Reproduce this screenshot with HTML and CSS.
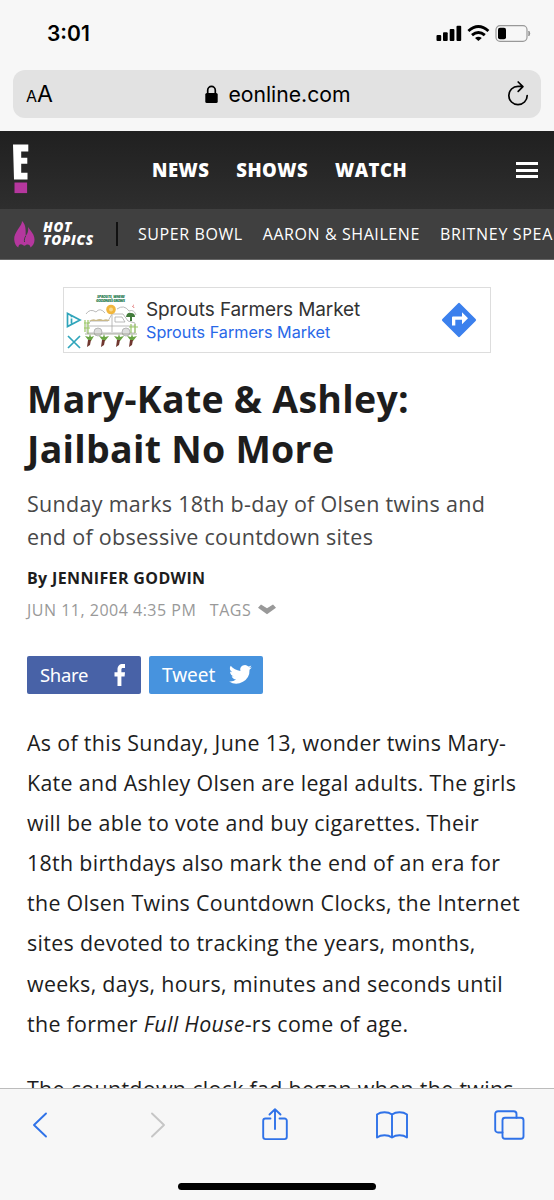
FILE: index.html
```html
<!DOCTYPE html>
<html lang="en">
<head>
<meta charset="utf-8">
<title>E! Online</title>
<link rel="stylesheet" href="styles.css">
</head>
<body>
<div class="phone">
  <header class="browser">
    <div class="status">
      <span class="clock">3:01</span>
      <svg class="indicators" width="96" height="20" viewBox="0 0 96 20">
        <g fill="#000"><rect x="0.500" y="10" width="4.700" height="6" rx="1"/><rect x="7" y="7.300" width="4.700" height="8.700" rx="1"/><rect x="13.700" y="4" width="4.700" height="12" rx="1"/><rect x="20.500" y="0.700" width="4.700" height="15.300" rx="1"/></g>
        <g fill="none" stroke="#000" stroke-width="2.900"><path d="M32.400 6Q42.400 -2.800 52.400 6"/><path d="M36 10.200Q42.400 4.600 48.800 10.200"/></g>
        <path d="M39 13Q42.400 10.400 45.800 13L42.400 16Z"/>
        <rect x="60" y="0.700" width="31" height="15.600" rx="4" fill="none" stroke="#999" stroke-width="1.200"/>
        <rect x="62" y="2.700" width="8" height="11.600" rx="2"/>
        <path d="M92.800 6q2 2.300 0 5z" fill="#888" stroke="#888" stroke-width=".7"/>
      </svg>
    </div>
    <div class="address">
      <span class="reader"><small>A</small>A</span>
      <span class="site"><svg width="13" height="19" viewBox="0 0 13 19"><rect x="0.300" y="8" width="12.400" height="10" rx="1.600"/><path d="M2.700 9V5.200a3.800 3.800 0 0 1 7.600 0V9" fill="none" stroke="#000" stroke-width="1.700"/></svg>eonline.com</span>
      <svg class="reload" width="22" height="26" viewBox="0 0 22 26" fill="none" stroke="#000" stroke-width="1.700" stroke-linecap="round" stroke-linejoin="round"><path d="M20.200 14.500A9.200 9.200 0 1 1 11 5.300h4.500M11.200 1l4.700 4.600-4.700 4.700"/></svg>
    </div>
  </header>

  <nav class="masthead">
    <svg class="brand" width="16" height="50" viewBox="0 0 16 50"><path fill="#fff" d="M0 .4h15.300v7H8.200v6.300h6.100v6H8.200v9h6.300v6.700H1z"/><path fill="#b5379e" d="M1.500 38.500h12.600v10.600H1.500z"/></svg>
    <ul class="sections"><li>NEWS</li><li>SHOWS</li><li>WATCH</li></ul>
    <div class="burger"><i></i><i></i><i></i></div>
  </nav>
  <nav class="topics">
    <svg class="flame" width="21" height="27" viewBox="0 0 21 27"><path fill="#b5379e" d="M8 0C8.300 5-.3 11 .2 18.500.5 22.500 2 25.200 4.300 26.400 4.500 24 6 23 7.700 23.500c1.400.4 1.800 1.200 2.800 1.200s1.200-1 2.500-1.200c2-.4 3.200 1 3.500 2.900 2.500-1.500 4-4.100 4-7.600 0-5.500-3.200-8-6.500-12.800.8 5.200-1 7-2.300 9.200C11.600 9.700 12.300 4 8 0z"/><path d="M11.700 15c-1.200 2-1.500 3.700-1.200 6" stroke="#404040" fill="none"/></svg>
    <div class="hot"><span>HOT</span><span>TOPICS</span></div>
    <span class="divider"></span>
    <span class="topic">SUPER BOWL</span><span class="topic">AARON &amp; SHAILENE</span><span class="topic last">BRITNEY SPEARS</span>
  </nav>

  <main>
    <aside class="ad">
      <svg class="choices" width="16" height="38" viewBox="0 0 16 38" fill="none" stroke="#30a5bb" stroke-width="1.700"><path d="M1.500 1.500v13L14 8zM5.500 6.500v5"/><path d="M5.500 3.800v1.500M2 24l12 12M14 24L2 36"/></svg>
      <svg class="art" width="54" height="54" viewBox="0 0 54 54">
        <g fill="none" stroke="#aaa" stroke-width=".8"><path d="M2 20q4-6 10-2 4-5 9 1M33 15q7-5 12 2 5-2 7 4"/><path d="M3 30l4-3h17l4-7h11l5 7 7 2v10H3zM28 21v17M31 23h7l3 5H31zM4 32h47"/><circle cx="14" cy="38" r="4" fill="#ddd"/><circle cx="42" cy="38" r="4" fill="#ddd"/></g>
        <path d="M5 27q4-3 7-1 4-2 7 0 4-2 7 1z" fill="#c9b98a"/>
        <circle cx="27" cy="15.500" r="4.800" fill="#f1b63c"/><circle cx="27" cy="15.500" r="2" fill="#f8d98e"/>
        <path d="M46 27v-4h-4q1-5 5-4 4 0 4 4h-3v4z" fill="#427b3b"/><path d="M48 13l2-3-1 4 2-1z" fill="#d66"/>
        <path d="M1 26v12M4 26v14M0 29h6M0 34h6M47 30v9M51 30v9M45 33h9" stroke="#9bc768" stroke-width="1.200"/>
        <path d="M1 40h52" stroke="#8a917b" stroke-width=".7"/>
        <g fill="#69a443"><path d="M5 47l-4-5 4 1 1-3 1 3 3-1-3 5zM19 47l-4-5 4 1 1-3 1 3 4-1-4 5zM34 47l-4-5 4 1 1-3 1 3 4-1-4 5zM47 47l-4-5 4 1 1-3 1 3 4-1-4 5z"/></g>
        <path d="M4 46h3l-1 5-3 2zM18 46h3l-1 5-3 2zM33 46h3l-1 5-3 2zM46 46h3l-1 5-3 2z" fill="#70372f"/>
        <g fill="#237a4d" font-family="Open Sans, sans-serif" font-size="3.800" font-weight="800" font-style="italic"><text x="13" y="3.500" textLength="28">SPROUTS, WHERE</text><text x="12" y="7.700" textLength="29">GOODNESS GROWS</text></g>
      </svg>
      <div class="adcopy"><span class="adname">Sprouts Farmers Market</span><span class="adlink">Sprouts Farmers Market</span></div>
      <svg class="directions" width="36" height="36" viewBox="0 0 36 36"><rect x="5.500" y="5.500" width="25" height="25" rx="1.500" transform="rotate(45 18 18)" fill="#3b80ed"/><path d="M11 23.500V15.500q0-1 1-1h9v-4.200l6 6-6 6v-4.500H14.300v5.700z" fill="#fff"/></svg>
    </aside>

    <article>
      <h1>Mary-Kate &amp; Ashley:<br>Jailbait No More</h1>
      <p class="deck">Sunday marks 18th b-day of Olsen twins and<br>end of obsessive countdown sites</p>
      <p class="byline">By JENNIFER GODWIN</p>
      <p class="meta"><span>JUN 11, 2004 4:35 PM</span><span>TAGS</span><svg width="18" height="11" viewBox="0 0 18 11"><path d="M3 .5L9 4.200 15 .5l3 3.200L9 10.300 0 3.700z" fill="#999"/></svg></p>
      <div class="share">
        <span class="button facebook">Share<svg width="12" height="22" viewBox="0 0 12 22"><path fill="#fff" d="M3.500 22V12.400H.5V8.300h3V5.500C3.500 2 5.500 0 8.700 0H11v4H9C7.800 4 7.400 4.600 7.400 5.700v2.600H11l-.4 4.100H7.400V22z"/></svg></span>
        <span class="button twitter">Tweet<svg width="23" height="19" viewBox="0 0 24 20"><path fill="#fff" d="M24 2.400c-.9.400-1.800.7-2.800.8 1-.6 1.800-1.600 2.200-2.700-1 .6-2 1-3.100 1.200A4.900 4.900 0 0 0 11.900 6.200C7.800 6 4.200 4 1.700.9a4.900 4.900 0 0 0 1.500 6.600c-.8 0-1.600-.2-2.200-.6v.1c0 2.400 1.700 4.400 3.900 4.800-.7.200-1.500.2-2.200.1.600 2 2.400 3.400 4.600 3.400A9.900 9.900 0 0 1 0 17.300 14 14 0 0 0 21.500 4.900c1-.7 1.800-1.600 2.500-2.500z"/></svg></span>
      </div>
      <p class="story">As of this Sunday, June 13, wonder twins Mary-<br>Kate and Ashley Olsen are legal adults. The girls<br>will be able to vote and buy cigarettes. Their<br>18th birthdays also mark the end of an era for<br>the Olsen Twins Countdown Clocks, the Internet<br>sites devoted to tracking the years, months,<br>weeks, days, hours, minutes and seconds until<br>the former <em>Full House</em>-rs come of age.</p>
      <p class="story">The countdown clock fad began when the twins</p>
    </article>
  </main>

  <footer class="toolbar">
    <div class="tools">
      <svg width="16" height="28" viewBox="0 0 16 28"><path d="M14 2.500L2 14l12 11.500"/></svg>
      <svg class="off" width="16" height="28" viewBox="0 0 16 28"><path d="M3 2.500L15 14 3 25.500"/></svg>
      <svg width="26" height="34" viewBox="0 0 26 34"><path d="M8.500 10.500H3.500a2.300 2.300 0 0 0-2.300 2.300v16a2.300 2.300 0 0 0 2.300 2.300h19a2.300 2.300 0 0 0 2.300-2.300v-16a2.300 2.300 0 0 0-2.300-2.300h-5M13 21V1.300M7.500 6.500L13 1.200 18.500 6.500"/></svg>
      <svg width="32" height="28" viewBox="0 0 32 28"><path d="M16 3.500C12 .5 5 .5 1 3.500v23c4-3 11-3 15 0 4-3 11-3 15 0v-23c-4-3-11-3-15 0v23"/></svg>
      <svg width="31" height="30" viewBox="0 0 31 30"><rect x="8.500" y="7.700" width="21" height="21" rx="2.500"/><path d="M8.500 22.500H4A2.800 2.800 0 0 1 1.200 19.700V4A2.800 2.800 0 0 1 4 1.200h15.700A2.800 2.800 0 0 1 22.500 4v3.700"/></svg>
    </div>
    <div class="home"></div>
  </footer>
</div>
</body>
</html>
```
FILE: styles.css
```css
* { box-sizing: border-box; }
body { margin: 0; background: #fff; color: #1d1d1d; font-family: "Open Sans", sans-serif; }
p, h1, ul { margin: 0; padding: 0; }
ul { list-style: none; }
svg { display: block; flex: none; overflow: visible; }
.phone { width: 554px; height: 1200px; overflow: hidden; display: flex; flex-direction: column; white-space: nowrap; }

.browser { height: 131px; flex: none; padding: 0 13px; background: #f7f7f7; color: #000; font-family: Inter, sans-serif; }
.status { height: 70px; display: flex; justify-content: space-between; padding: 20px 9px 0 34px; }
.clock { font-size: 21px; line-height: 27px; font-weight: 600; }
.indicators { margin-top: 5px; }
.address { height: 48px; border-radius: 12px; background: #e2e2e2; display: flex; align-items: center; justify-content: space-between; padding: 0 12px 0 13px; }
.reader { width: 40px; font-size: 23px; }
.reader small { font-size: 16px; }
.site { display: flex; align-items: center; gap: 10px; margin-left: 1px; font-size: 21.200px; }
.reload { margin-left: 18px; }

.masthead { height: 78px; flex: none; display: flex; align-items: flex-start; padding: 13px 16px 0 13px; background: linear-gradient(#202020, #2e2e2e); color: #fff; }
.sections { display: flex; gap: 27px; margin-left: 123px; padding-top: 13px; font-size: 18.500px; line-height: 26px; font-weight: 800; letter-spacing: .45px; }
.burger { width: 22px; margin: 18px 0 0 auto; display: grid; gap: 3.700px; }
.burger i { height: 3px; background: #fff; }
.topics { height: 51px; flex: none; display: flex; align-items: center; padding-left: 14px; background: #404040; color: #fff; border-bottom: 1px solid #666; }
.topics > * { flex: none; }
.hot { margin-left: 8px; width: 60px; display: grid; font-size: 13.500px; line-height: 13px; font-style: italic; font-weight: 800; letter-spacing: .75px; }
.divider { width: 2px; height: 24px; background: #111; margin: 0 20px 0 13px; }
.topic { font-size: 16px; letter-spacing: .58px; margin-right: 20px; }
.last { letter-spacing: .68px; }

main { flex: 1; min-height: 0; overflow: hidden; padding: 27px 26px 0 27px; }
.ad { width: 428px; height: 66px; margin: 0 0 21px 36px; border: 1px solid #ddd; display: flex; align-items: center; padding: 0 13px 0 2px; }
.choices { margin-top: 21px; }
.art { margin: 2px 0 0 2px; }
.adcopy { margin: 1px 0 0 8px; display: grid; font-family: Inter, sans-serif; }
.adname { font-size: 19px; line-height: 22px; color: #333; letter-spacing: -.1px; }
.adlink { font-size: 16.200px; line-height: 22px; color: #2868e8; }
.directions { margin-left: auto; }

h1 { font-size: 37.500px; line-height: 49.500px; font-weight: 700; letter-spacing: .27px; }
.deck { margin-top: 14px; font-size: 21.500px; line-height: 33.300px; color: #484848; letter-spacing: .29px; }
.byline { margin-top: 12px; font-size: 16px; line-height: 24px; font-weight: 700; letter-spacing: .36px; }
.meta { display: flex; align-items: center; height: 24px; margin-top: 8px; gap: 13.500px; font-size: 16px; font-weight: 500; color: #999; letter-spacing: .5px; }
.meta svg { margin-left: -7px; }
.share { display: flex; gap: 8px; margin-top: 34px; }
.button { width: 114px; height: 38px; border-radius: 2px; display: flex; align-items: center; justify-content: space-between; color: #fff; font: 19px "Noto Sans", sans-serif; }
.facebook { padding: 0 15px 0 13px; background: #4862a7; font-size: 18.500px; letter-spacing: -.3px; }
.twitter { padding: 0 11px 0 13px; background: #4793de; }
.story { margin-top: 29px; font-size: 21.400px; line-height: 40.150px; letter-spacing: .32px; }
.story + .story { margin-top: 25.500px; }

.toolbar { height: 112px; flex: none; background: #f7f7f7; border-top: 1px solid #bcbcbc; padding-top: 17px; }
.tools { height: 38px; display: grid; grid-template-columns: repeat(5, 117.600px); justify-items: center; align-items: center; margin-left: -19.200px; fill: none; stroke: #2f72e8; stroke-width: 1.900; stroke-linecap: round; stroke-linejoin: round; }
.tools .off { stroke: #c6c6c6; }
.home { width: 198px; height: 7px; border-radius: 4px; background: #000; margin: 39px auto 0; }
```
